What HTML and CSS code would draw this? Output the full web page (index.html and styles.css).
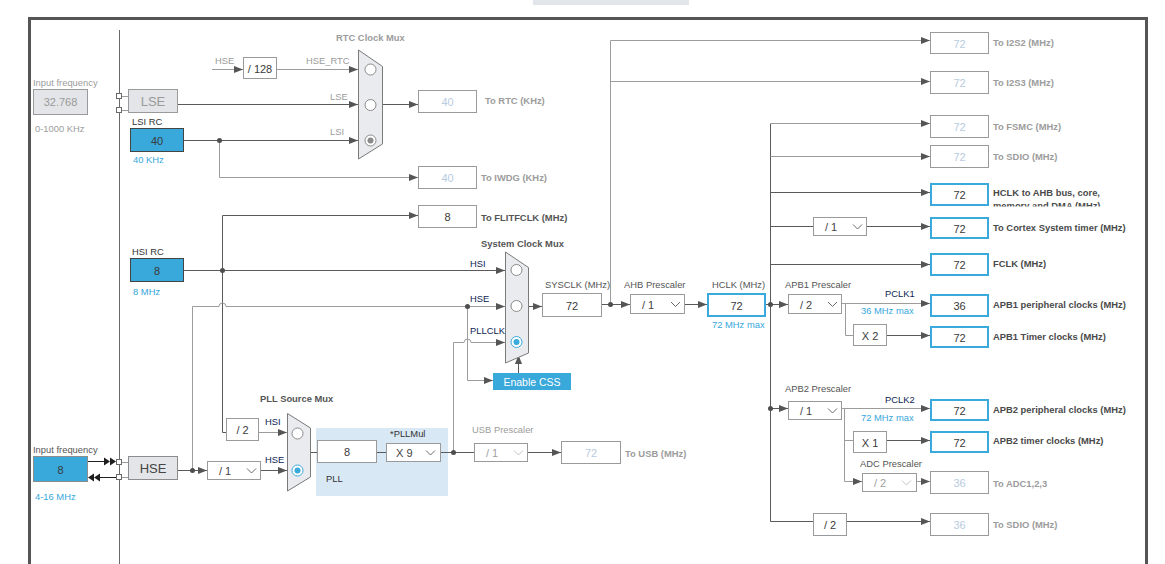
FILE: index.html
```html
<!DOCTYPE html>
<html lang="en">
<head>
<meta charset="utf-8">
<title>Clock Configuration</title>
<link rel="stylesheet" href="styles.css">
</head>
<body>
<div class="stage">
  <div class="tab"></div>
  <div class="frame"></div>
  <svg class="diagram" width="1165" height="564" viewBox="0 0 1165 564" xmlns="http://www.w3.org/2000/svg">
    <defs>
      <marker id="ar" viewBox="0 0 9 7" refX="9" refY="3.5" markerWidth="9" markerHeight="7" markerUnits="userSpaceOnUse" orient="auto">
        <path d="M0,0L9,3.5L0,7z" class="head"/>
      </marker>
      <clipPath id="clipAhb"><rect x="990" y="183" width="160" height="23.5"/></clipPath>
    </defs>

    <!-- PLL block background -->
    <rect class="pllbg" x="316" y="428" width="132" height="68"/>

    <!-- main bus line -->
    <path class="w bus" d="M119.5,30V564"/>

    <!-- LSE / LSI / RTC -->
    <rect class="port" x="116.5" y="93.5" width="5" height="5"/>
    <rect class="port" x="116.5" y="107.5" width="5" height="5"/>
    <path class="g" d="M122,96.5H128M122,110.5H128"/>
    <path class="w" d="M178,104.5H358" marker-end="url(#ar)"/>
    <path class="w" d="M184,140.5H358" marker-end="url(#ar)"/>
    <path class="g" d="M212,69.5H243" marker-end="url(#ar)"/>
    <path class="g" d="M277,69.5H358" marker-end="url(#ar)"/>
    <path class="g" d="M219.5,140.5V177.5H418" marker-end="url(#ar)"/>
    <path class="w" d="M382,104.5H418" marker-end="url(#ar)"/>

    <!-- HSI -->
    <path class="w" d="M184,270.5H505" marker-end="url(#ar)"/>
    <path class="w" d="M222.5,432.5V215.5H418" marker-end="url(#ar)"/>
    <path class="w" d="M222.5,432.5H226"/>
    <path class="g" d="M259,432.5H287" marker-end="url(#ar)"/>

    <!-- HSE -->
    <rect class="port" x="116.5" y="459.5" width="5" height="5"/>
    <rect class="port" x="116.5" y="474.5" width="5" height="5"/>
    <path class="g" d="M122,462.5H128M122,477.5H128"/>
    <path class="k" d="M88,461.5H104M100,477.5H116"/>
    <polygon class="kf" points="104,457.5 110,461.5 104,465.5"/>
    <polygon class="kf" points="110,457.5 116,461.5 110,465.5"/>
    <polygon class="kf" points="94,473.5 88,477.5 94,481.5"/>
    <polygon class="kf" points="100,473.5 94,477.5 100,481.5"/>
    <path class="w" d="M178,470.5H207" marker-end="url(#ar)"/>
    <path class="w" d="M261,470.5H287" marker-end="url(#ar)"/>
    <path class="g" d="M192.5,470.5V306.5H219a3.5,3.5 0 0 1 7,0H505" marker-end="url(#ar)"/>
    <path class="g" d="M467.5,306.5V380.5H493" marker-end="url(#ar)"/>

    <!-- PLL chain -->
    <path class="w" d="M311,452.5H317M377,452.5H386M441,452.5H474"/>
    <path class="w" d="M528,452.5H561" marker-end="url(#ar)"/>
    <path class="g" d="M453.5,452.5V342.5H464a3.5,3.5 0 0 1 7,0H505" marker-end="url(#ar)"/>

    <!-- system clock -->
    <path class="w" d="M518.5,373V355" marker-end="url(#ar)"/>
    <path class="w" d="M528,306.5H542" marker-end="url(#ar)"/>
    <path class="w" d="M602,304.5H630" marker-end="url(#ar)"/>
    <path class="g" d="M610.5,304.5V40.5H930" marker-end="url(#ar)"/>
    <path class="g" d="M610.5,81.5H930" marker-end="url(#ar)"/>
    <path class="w" d="M685,304.5H707" marker-end="url(#ar)"/>
    <path class="w" d="M766,304.5H788" marker-end="url(#ar)"/>

    <!-- HCLK distribution -->
    <path class="w" d="M770.5,123.5V521.5"/>
    <path class="g" d="M770.5,123.5H930" marker-end="url(#ar)"/>
    <path class="g" d="M770.5,156.5H930" marker-end="url(#ar)"/>
    <path class="w" d="M770.5,192.5H930" marker-end="url(#ar)"/>
    <path class="w" d="M770.5,226.5H813"/>
    <path class="w" d="M867,226.5H930" marker-end="url(#ar)"/>
    <path class="w" d="M770.5,264.5H930" marker-end="url(#ar)"/>
    <path class="g" d="M842,303.5H930" marker-end="url(#ar)"/>
    <path class="g" d="M845.5,303.5V335.5H853"/>
    <path class="w" d="M887,335.5H930" marker-end="url(#ar)"/>
    <path class="w" d="M770.5,408.5H788" marker-end="url(#ar)"/>
    <path class="g" d="M842,408.5H930" marker-end="url(#ar)"/>
    <path class="g" d="M844.5,408.5V481.5H862" marker-end="url(#ar)"/>
    <path class="g" d="M844.5,440.5H853"/>
    <path class="w" d="M887,440.5H930" marker-end="url(#ar)"/>
    <path class="g" d="M917,481.5H930" marker-end="url(#ar)"/>
    <path class="w" d="M770.5,521.5H813"/>
    <path class="w" d="M847,521.5H930" marker-end="url(#ar)"/>

    <!-- junction dots -->
    <circle class="jn" cx="219.5" cy="140.5" r="2.5"/>
    <circle class="jn" cx="222.5" cy="270.5" r="2.5"/>
    <circle class="jn" cx="192.5" cy="470.5" r="2.5"/>
    <circle class="jn" cx="467.5" cy="306.5" r="2.5"/>
    <circle class="jn" cx="453.5" cy="452.5" r="2.5"/>
    <circle class="jn" cx="610.5" cy="304.5" r="2.5"/>
    <circle class="jn" cx="770.5" cy="304.5" r="2.5"/>
    <circle class="jn" cx="770.5" cy="408.5" r="2.5"/>

    <!-- muxes -->
    <polygon class="mux" points="358.5,50 382.5,66.5 382.5,144 358.5,159"/>
    <circle class="rad" cx="370.5" cy="69.5" r="5.5"/>
    <circle class="rad" cx="370.5" cy="105" r="5.5"/>
    <circle class="rad" cx="370.5" cy="140.5" r="5.5"/>
    <circle class="dot gr" cx="370.5" cy="140.5" r="3"/>

    <polygon class="mux" points="505.5,252 528.5,267.5 528.5,353 505.5,363"/>
    <circle class="rad" cx="516.5" cy="270" r="5.5"/>
    <circle class="rad" cx="516.5" cy="306" r="5.5"/>
    <circle class="rad on" cx="516.5" cy="342" r="5.5"/>
    <circle class="dot" cx="516.5" cy="342" r="3"/>

    <polygon class="mux" points="287.5,413.5 310.5,428 310.5,477 287.5,491"/>
    <circle class="rad" cx="297.5" cy="433.5" r="5.5"/>
    <circle class="rad on" cx="297.5" cy="470.5" r="5.5"/>
    <circle class="dot" cx="297.5" cy="470.5" r="3"/>

    <!-- input boxes -->
    <rect class="bx gray" x="33.5" y="89.5" width="54" height="25"/>
    <text class="v gr" x="60.5" y="102">32.768</text>
    <rect class="bx gray" x="128.5" y="89.5" width="49" height="23"/>
    <text class="v gr big" x="153" y="101.5">LSE</text>
    <rect class="bx cyan" x="130.5" y="128.5" width="53" height="23"/>
    <text class="v" x="157" y="140.5">40</text>
    <rect class="bx cyan" x="130.5" y="258.5" width="53" height="23"/>
    <text class="v" x="157" y="270.5">8</text>
    <rect class="bx cyan soft" x="33.5" y="456.5" width="54" height="25"/>
    <text class="v" x="60.5" y="469.5">8</text>
    <rect class="bx gray soft" x="128.5" y="456.5" width="49" height="23"/>
    <text class="v dk big" x="153" y="468.5">HSE</text>

    <!-- RTC side boxes -->
    <rect class="bx" x="243.5" y="57.5" width="33" height="21"/>
    <text class="v" x="260" y="68.5">/ 128</text>
    <rect class="bx" x="418.5" y="90.5" width="58" height="22"/>
    <text class="v dim" x="447.5" y="102">40</text>
    <rect class="bx" x="418.5" y="166.5" width="58" height="22"/>
    <text class="v dim" x="447.5" y="178">40</text>
    <rect class="bx" x="418.5" y="205.5" width="58" height="22"/>
    <text class="v" x="447.5" y="217">8</text>

    <!-- PLL area -->
    <rect class="bx" x="226.5" y="418.5" width="32" height="22"/>
    <text class="v" x="242.5" y="430">/ 2</text>
    <rect class="bx" x="207.5" y="461.5" width="53" height="18"/>
    <text class="s" x="219" y="471">/ 1</text>
    <polyline class="chev" points="247,468.5 251.5,473 256,468.5"/>
    <rect class="bx" x="317.5" y="440.5" width="59" height="22"/>
    <text class="v" x="347" y="452">8</text>
    <rect class="bx" x="386.5" y="443.5" width="54" height="18"/>
    <text class="s" x="396" y="453">X 9</text>
    <polyline class="chev" points="426,450.5 430.5,455 435,450.5"/>
    <rect class="bx" x="474.5" y="443.5" width="53" height="18"/>
    <text class="s gr" x="486" y="453">/ 1</text>
    <polyline class="chev dim" points="514,450.5 518.5,455 523,450.5"/>
    <rect class="bx" x="561.5" y="441.5" width="59" height="22"/>
    <text class="v dim" x="591" y="453">72</text>

    <!-- system clock boxes -->
    <rect class="btn" x="493" y="373" width="78" height="17"/>
    <text class="v white" x="532" y="382">Enable CSS</text>
    <rect class="bx" x="542.5" y="293.5" width="59" height="23"/>
    <text class="v" x="572" y="305.5">72</text>
    <rect class="bx" x="630.5" y="294.5" width="54" height="19"/>
    <text class="s" x="642" y="304.5">/ 1</text>
    <polyline class="chev" points="671,302 675.5,306.5 680,302"/>
    <rect class="bx blue" x="708" y="294" width="57" height="22"/>
    <text class="v" x="736.5" y="305.5">72</text>

    <!-- prescalers -->
    <rect class="bx" x="813.5" y="217.5" width="53" height="18"/>
    <text class="s" x="825" y="227">/ 1</text>
    <polyline class="chev" points="853,224.5 857.5,229 862,224.5"/>
    <rect class="bx" x="788.5" y="294.5" width="53" height="19"/>
    <text class="s" x="800" y="304.5">/ 2</text>
    <polyline class="chev" points="828,302 832.5,306.5 837,302"/>
    <rect class="bx" x="853.5" y="324.5" width="33" height="21"/>
    <text class="v" x="870" y="335.5">X 2</text>
    <rect class="bx" x="788.5" y="401.5" width="53" height="18"/>
    <text class="s" x="800" y="411">/ 1</text>
    <polyline class="chev" points="828,408.5 832.5,413 837,408.5"/>
    <rect class="bx" x="853.5" y="431.5" width="33" height="21"/>
    <text class="v" x="870" y="442.5">X 1</text>
    <rect class="bx" x="862.5" y="473.5" width="54" height="18"/>
    <text class="s gr" x="874" y="483">/ 2</text>
    <polyline class="chev dim" points="902,480.5 906.5,485 911,480.5"/>
    <rect class="bx" x="813.5" y="513.5" width="33" height="22"/>
    <text class="v" x="830" y="525">/ 2</text>

    <!-- outputs -->
    <rect class="bx" x="930.5" y="32.5" width="58" height="21"/>
    <text class="v dim" x="959.5" y="43.5">72</text>
    <rect class="bx" x="930.5" y="71.5" width="58" height="22"/>
    <text class="v dim" x="959.5" y="83">72</text>
    <rect class="bx" x="930.5" y="115.5" width="58" height="22"/>
    <text class="v dim" x="959.5" y="127">72</text>
    <rect class="bx" x="930.5" y="145.5" width="58" height="22"/>
    <text class="v dim" x="959.5" y="157">72</text>
    <rect class="bx blue" x="931" y="184" width="57" height="21"/>
    <text class="v" x="959.5" y="195">72</text>
    <rect class="bx blue" x="931" y="218" width="57" height="20"/>
    <text class="v" x="959.5" y="228.5">72</text>
    <rect class="bx blue" x="931" y="254" width="57" height="21"/>
    <text class="v" x="959.5" y="265">72</text>
    <rect class="bx blue" x="931" y="295" width="57" height="21"/>
    <text class="v" x="959.5" y="306">36</text>
    <rect class="bx blue" x="931" y="327" width="57" height="20"/>
    <text class="v" x="959.5" y="337.5">72</text>
    <rect class="bx blue" x="931" y="400" width="57" height="20"/>
    <text class="v" x="959.5" y="410.5">72</text>
    <rect class="bx blue" x="931" y="432" width="57" height="20"/>
    <text class="v" x="959.5" y="442.5">72</text>
    <rect class="bx" x="930.5" y="471.5" width="58" height="22"/>
    <text class="v dim" x="959.5" y="483">36</text>
    <rect class="bx" x="930.5" y="513.5" width="58" height="22"/>
    <text class="v dim" x="959.5" y="525">36</text>

    <!-- labels -->
    <text class="t gr" x="33" y="82">Input frequency</text>
    <text class="t gr" x="35" y="128">0-1000 KHz</text>
    <text class="t dk" x="132" y="121">LSI RC</text>
    <text class="t bl" x="133" y="159">40 KHz</text>
    <text class="t dk" x="132" y="251">HSI RC</text>
    <text class="t bl" x="133" y="291">8 MHz</text>
    <text class="t" x="33" y="449">Input frequency</text>
    <text class="t bl" x="35" y="496">4-16 MHz</text>

    <text class="t b gr" x="336" y="37">RTC Clock Mux</text>
    <text class="t gr" x="215" y="60">HSE</text>
    <text class="t gr" x="306" y="60">HSE_RTC</text>
    <text class="t gr" x="330" y="96">LSE</text>
    <text class="t gr" x="330" y="131">LSI</text>
    <text class="t b gr" x="485" y="100">To RTC (KHz)</text>
    <text class="t b gr" x="481" y="177">To IWDG (KHz)</text>
    <text class="t b" x="481" y="217">To FLITFCLK (MHz)</text>

    <text class="t b" x="481" y="243.5">System Clock Mux</text>
    <text class="t nv" x="470" y="263.5">HSI</text>
    <text class="t nv" x="470" y="298">HSE</text>
    <text class="t nv" x="470" y="330">PLLCLK</text>
    <text class="t" x="545" y="284">SYSCLK (MHz)</text>

    <text class="t b" x="260" y="398.5">PLL Source Mux</text>
    <text class="t nv" x="265" y="421">HSI</text>
    <text class="t nv" x="265" y="459">HSE</text>
    <text class="t dk" x="390" y="433.5">*PLLMul</text>
    <text class="t dk" x="326" y="478">PLL</text>
    <text class="t gr" x="472" y="429">USB Prescaler</text>
    <text class="t b gr" x="625" y="453.5">To USB (MHz)</text>

    <text class="t" x="624" y="284">AHB Prescaler</text>
    <text class="t" x="712" y="284">HCLK (MHz)</text>
    <text class="t bl" x="712" y="324">72 MHz max</text>
    <text class="t" x="785" y="284">APB1 Prescaler</text>
    <text class="t nv" x="885" y="293.5">PCLK1</text>
    <text class="t bl" x="861" y="310">36 MHz max</text>
    <text class="t" x="785" y="388.5">APB2 Prescaler</text>
    <text class="t nv" x="885" y="399">PCLK2</text>
    <text class="t bl" x="861" y="417.5">72 MHz max</text>
    <text class="t" x="860" y="463.5">ADC Prescaler</text>

    <text class="t b gr" x="993" y="42.5">To I2S2 (MHz)</text>
    <text class="t b gr" x="993" y="82">To I2S3 (MHz)</text>
    <text class="t b gr" x="993" y="126">To FSMC (MHz)</text>
    <text class="t b gr" x="993" y="156">To SDIO (MHz)</text>
    <g clip-path="url(#clipAhb)">
      <text class="t b dk2" x="993" y="192">HCLK to AHB bus, core,</text>
      <text class="t b dk2" x="993" y="205">memory and DMA (MHz)</text>
    </g>
    <text class="t b dk2" x="993" y="227">To Cortex System timer (MHz)</text>
    <text class="t b dk2" x="993" y="263">FCLK (MHz)</text>
    <text class="t b dk2" x="993" y="304">APB1 peripheral clocks (MHz)</text>
    <text class="t b dk2" x="993" y="336">APB1 Timer clocks (MHz)</text>
    <text class="t b dk2" x="993" y="409">APB2 peripheral clocks (MHz)</text>
    <text class="t b dk2" x="993" y="440">APB2 timer clocks (MHz)</text>
    <text class="t b gr" x="993" y="483">To ADC1,2,3</text>
    <text class="t b gr" x="993" y="524">To SDIO (MHz)</text>
  </svg>
</div>
</body>
</html>
```

FILE: styles.css
```css
html, body {
  margin: 0;
  padding: 0;
  background: #ffffff;
  overflow: hidden;
  font-family: "Liberation Sans", Arial, sans-serif;
}

.stage {
  position: relative;
  width: 1165px;
  height: 564px;
  overflow: hidden;
}

.tab {
  margin-left: 533px;
  width: 156px;
  height: 5px;
  background: #e2e5e9;
}

.frame {
  margin: 12px 0 0 28px;
  width: 1120px;
  height: 600px;
  box-sizing: border-box;
  border: 3px solid #555555;
  border-bottom: 0;
}

.diagram {
  position: absolute;
  left: 0;
  top: 0;
}

.diagram text {
  font-family: "Liberation Sans", Arial, sans-serif;
}

/* wires */
.w { fill: none; stroke: #5a5a5a; stroke-width: 1; }
.g { fill: none; stroke: #9c9c9c; stroke-width: 1; }
.bus { stroke: #6a6a6a; }
.k { fill: none; stroke: #222222; stroke-width: 1; }
.kf { fill: #1e1e1e; }
.head { fill: #555555; }
.jn { fill: #4d4d4d; }
.port { fill: #ffffff; stroke: #6a6a6a; }

/* muxes */
.mux { fill: #e9ebee; stroke: #7a7a7a; stroke-width: 1; }
.rad { fill: #ffffff; stroke: #8a8a8a; stroke-width: 1; }
.rad.on { stroke: #3aa9dc; }
.dot { fill: #3aa9dc; }
.dot.gr { fill: #8a8a8a; }

.pllbg { fill: #d9e8f5; }

/* boxes */
.bx { fill: #ffffff; stroke: #9a9a9a; stroke-width: 1; }
.bx.gray { fill: #e3e5e8; }
.bx.cyan { fill: #39a8db; stroke: #444444; }
.bx.soft { stroke: #8c8c8c; }
.bx.blue { stroke: #3aa9dc; stroke-width: 2; }
.btn { fill: #39a8db; }

.chev { fill: none; stroke: #6a6a6a; stroke-width: 1; }
.chev.dim { stroke: #c4c4c4; }

/* value text */
.v {
  font-size: 11px;
  fill: #3a3a3a;
  text-anchor: middle;
  dominant-baseline: central;
}
.v.dim { fill: #b7cbe0; }
.v.gr { fill: #9a9a9a; }
.v.dk { fill: #444444; }
.v.big { font-size: 13px; }
.v.white { fill: #ffffff; font-size: 10.5px; }

.s {
  font-size: 11px;
  fill: #444444;
  dominant-baseline: central;
}
.s.gr { fill: #a0a0a0; }

/* labels */
.t {
  font-size: 9.4px;
  fill: #555555;
  dominant-baseline: central;
}
.t.b { font-weight: bold; }
.t.gr { fill: #9c9c9c; }
.t.dk { fill: #333333; }
.t.dk2 { fill: #4a4a4a; }
.t.nv { fill: #0b2452; }
.t.bl { fill: #35a7dc; }
```
